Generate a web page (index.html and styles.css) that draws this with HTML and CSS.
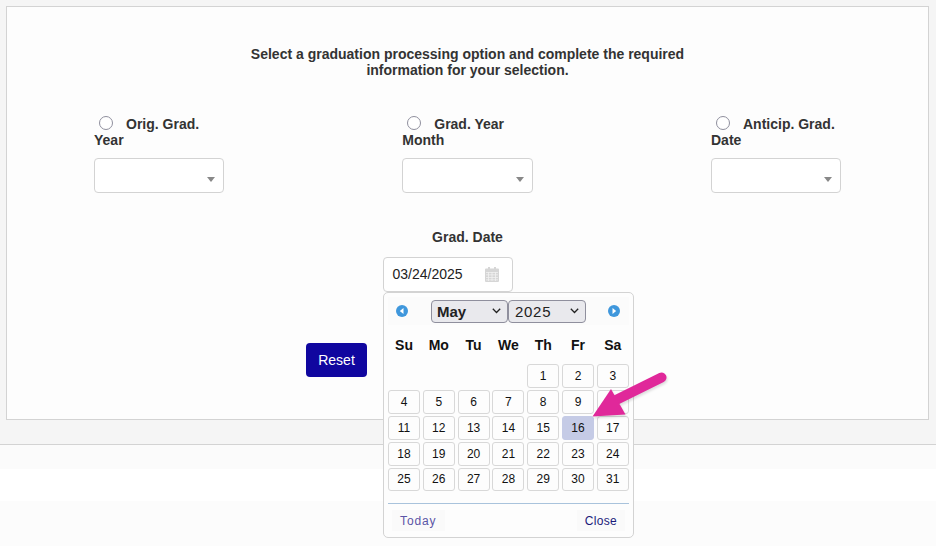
FILE: index.html
```html
<!DOCTYPE html>
<html lang="en">
<head>
<meta charset="utf-8">
<title>Graduation processing</title>
<link rel="stylesheet" href="styles.css">
</head>
<body>
<main class="page">
  <section class="panel">
    <h1 class="intro">Select a graduation processing option and complete the required<br>information for your selection.</h1>
    <div class="options">
      <div class="option">
        <label class="option-label"><input type="radio" name="grad" class="radio">Orig. Grad. Year</label>
        <div class="combo"><span class="caret"></span></div>
      </div>
      <div class="option">
        <label class="option-label"><input type="radio" name="grad" class="radio">Grad. Year Month</label>
        <div class="combo"><span class="caret"></span></div>
      </div>
      <div class="option">
        <label class="option-label"><input type="radio" name="grad" class="radio">Anticip. Grad. Date</label>
        <div class="combo"><span class="caret"></span></div>
      </div>
    </div>
    <div class="date-field">
      <div class="date-label">Grad. Date</div>
      <div class="date-input">
        <span class="date-value">03/24/2025</span>
        <svg class="cal-icon" width="14" height="15" viewBox="0 0 14 15" aria-hidden="true">
          <path fill="#d6d6d6" d="M1 1.5h2V0h2v1.5h4V0h2v1.5h2a1 1 0 0 1 1 1V14a1 1 0 0 1-1 1H1a1 1 0 0 1-1-1V2.500a1 1 0 0 1 1-1z"/>
          <path fill="#f2f2f2" d="M1 5h12v.8H1zM1 7.500h12v.8H1zM1 10h12v.8H1zM1 12.500h12v.8H1zM3.200 5h.8v9h-.8zM6.600 5h.8v9h-.8zM10 5h.8v9H10z"/>
        </svg>
      </div>
    </div>
    <div class="actions"><button class="reset" type="button">Reset</button></div>
  </section>
  <div class="footer">
    <div class="band-a"></div>
    <div class="band-b"></div>
    <div class="band-c"></div>
  </div>

  <div class="datepicker">
    <div class="dp-head">
      <svg class="dp-nav" width="12" height="12" viewBox="0 0 12 12" aria-hidden="true"><circle cx="6" cy="6" r="6" fill="#3f97dc"/><path d="M7.500 3v6L3.800 6z" fill="#fff"/></svg>
      <div class="dp-selects">
        <select class="dp-select dp-month" aria-label="Month">
          <option>May</option>
        </select>
        <select class="dp-select dp-year" aria-label="Year">
          <option>2025</option>
        </select>
      </div>
      <svg class="dp-nav" width="12" height="12" viewBox="0 0 12 12" aria-hidden="true"><circle cx="6" cy="6" r="6" fill="#3f97dc"/><path d="M4.500 3v6l3.700-3z" fill="#fff"/></svg>
    </div>
    <div class="dp-grid dp-weekdays">
      <span>Su</span><span>Mo</span><span>Tu</span><span>We</span><span>Th</span><span>Fr</span><span>Sa</span>
    </div>
    <div class="dp-grid dp-days">
      <span class="blank"></span><span class="blank"></span><span class="blank"></span><span class="blank"></span>
      <a>1</a><a>2</a><a>3</a>
      <a>4</a><a>5</a><a>6</a><a>7</a><a>8</a><a>9</a><a>10</a>
      <a>11</a><a>12</a><a>13</a><a>14</a><a>15</a><a class="active">16</a><a>17</a>
      <a>18</a><a>19</a><a>20</a><a>21</a><a>22</a><a>23</a><a>24</a>
      <a class="short">25</a><a class="short">26</a><a class="short">27</a><a class="short">28</a><a class="short">29</a><a class="short">30</a><a class="short">31</a>
    </div>
    <div class="dp-foot">
      <button class="dp-btn dp-today" type="button">Today</button>
      <button class="dp-btn dp-close" type="button">Close</button>
    </div>
  </div>

  <svg class="arrow" width="90" height="60" viewBox="0 0 90 60" aria-hidden="true">
    <g transform="translate(-585 -368)">
      <path d="M661.500 377.500 L614 401" stroke="#e0289a" stroke-width="10" stroke-linecap="round" fill="none"/>
      <path d="M592.500 416.500 L611 389 L625.500 414.500 Z" fill="#e0289a"/>
    </g>
  </svg>
</main>
</body>
</html>
```

FILE: styles.css
```css
* { box-sizing: border-box; }
html, body { margin: 0; padding: 0; }
body {
  width: 936px;
  height: 546px;
  overflow: hidden;
  background: #f5f5f5;
  font-family: "Liberation Sans", Arial, sans-serif;
  color: #333;
}
.page { position: relative; width: 936px; height: 546px; padding-top: 6px; }

.panel {
  width: 923px;
  height: 414px;
  margin-left: 6px;
  border: 1px solid #d3d3d3;
  background: #fdfdfd;
  padding-top: 39px;
}
.intro {
  margin: 0;
  font-size: 14px;
  font-weight: 700;
  line-height: 16px;
  text-align: center;
}
.options {
  display: flex;
  justify-content: space-between;
  padding: 0 87px;
  margin-top: 38px;
}
.option { width: 130px; }
.option:nth-child(2) { width: 130.5px; }
.option-label {
  display: block;
  font-size: 14px;
  font-weight: 700;
  line-height: 16px;
  min-height: 32px;
}
.radio {
  width: 14px;
  height: 14px;
  margin: 0 13px 0 5px;
  vertical-align: -1px;
  appearance: none;
  border: 1px solid #8f8f9d;
  border-radius: 50%;
  background: #fff;
}
.combo {
  position: relative;
  height: 35px;
  margin-top: 10px;
  border: 1px solid #d3d3d3;
  border-radius: 4px;
  background: #fff;
}
.caret {
  position: absolute;
  right: 8px;
  top: 18px;
  border-left: 4px solid transparent;
  border-right: 4px solid transparent;
  border-top: 5px solid #888;
}

.date-field { display: flex; flex-direction: column; align-items: center; margin-top: 36px; }
.date-label { font-size: 14px; font-weight: 700; line-height: 16px; }
.date-input {
  display: flex;
  align-items: center;
  justify-content: space-between;
  width: 130px;
  height: 35px;
  margin: 12px 40px 0 0;
  padding: 0 13px 0 9px;
  border: 1px solid #d3d3d3;
  border-radius: 4px;
  background: #fff;
  font-size: 14px;
  color: #222;
}
.date-value { margin-bottom: 2px; }
.cal-icon { display: block; }
.actions { padding-left: 299px; margin-top: 51px; }
.reset {
  display: block;
  width: 61px;
  height: 34px;
  padding: 0;
  border: 0;
  border-radius: 4px;
  background: #10069f;
  color: #fff;
  font: 14px "Liberation Sans", Arial, sans-serif;
}

.footer { margin-top: 24px; border-top: 1px solid #d3d3d3; }
.band-a { height: 24px; background: #fbfbfb; }
.band-b { height: 32px; background: #fff; }
.band-c { height: 45px; background: #fcfcfc; }

.datepicker {
  position: absolute;
  left: 383px;
  top: 292px;
  width: 251px;
  height: 246px;
  padding: 4px 4px 0;
  border: 1px solid #d3d3d3;
  border-radius: 5px;
  background: #fdfdfd;
}
.dp-head {
  display: flex;
  align-items: center;
  justify-content: space-between;
  height: 28px;
  padding: 0 9px 0 8px;
  background: #fbfbfb;
}
.dp-nav { display: block; }
.dp-selects { display: flex; margin-left: 1px; }
.dp-select {
  height: 23px;
  padding: 0 0 0 5px;
  border: 1px solid #8f8f9d;
  border-radius: 4px;
  appearance: none;
  background-color: #e9e9ed;
  background-image: url("data:image/svg+xml,%3Csvg xmlns='http://www.w3.org/2000/svg' width='9' height='6'%3E%3Cpath d='M.8.8l3.7 3.7L8.200.8' fill='none' stroke='%23222' stroke-width='1.300'/%3E%3C/svg%3E");
  background-repeat: no-repeat;
  background-position: right 6px center;
  color: #222;
  font: 700 15px "Liberation Sans", Arial, sans-serif;
}
.dp-month { width: 77px; }
.dp-year { width: 78px; padding-left: 6px; font-weight: 400; letter-spacing: .7px; }
.dp-grid {
  display: grid;
  grid-template-columns: repeat(7, 32px);
  column-gap: 2.800px;
}
.dp-weekdays {
  margin-top: 12px;
  height: 27px;
  font-size: 14px;
  font-weight: 700;
  line-height: 16px;
  color: #111;
  text-align: center;
}
.dp-days { row-gap: 2px; font-size: 12px; color: #111; }
.dp-days a {
  display: flex;
  align-items: center;
  justify-content: center;
  height: 24px;
  border: 1px solid #d8d8d8;
  border-radius: 3px;
  background: #fdfdfd;
}
.dp-days a.short { height: 23px; padding-bottom: 1px; }
.dp-days a.active { background: #c5cbe6; border-color: #c5cbe6; }
.dp-foot {
  display: flex;
  justify-content: space-between;
  align-items: center;
  height: 34px;
  margin-top: 12px;
  padding: 0 4px 0 4px;
  border-top: 1px solid #a9c3dc;
}
.dp-btn {
  padding: 0 8px;
  height: 21px;
  border: 0;
  background: #fafafa;
  font: 12px "Liberation Sans", Arial, sans-serif;
}
.dp-today { color: #5b55a6; letter-spacing: .9px; }
.dp-close { color: #1a1a7a; letter-spacing: .3px; }

.arrow { position: absolute; left: 585px; top: 368px; filter: drop-shadow(1px 2px 1px rgba(0,0,0,.12)); }
```
